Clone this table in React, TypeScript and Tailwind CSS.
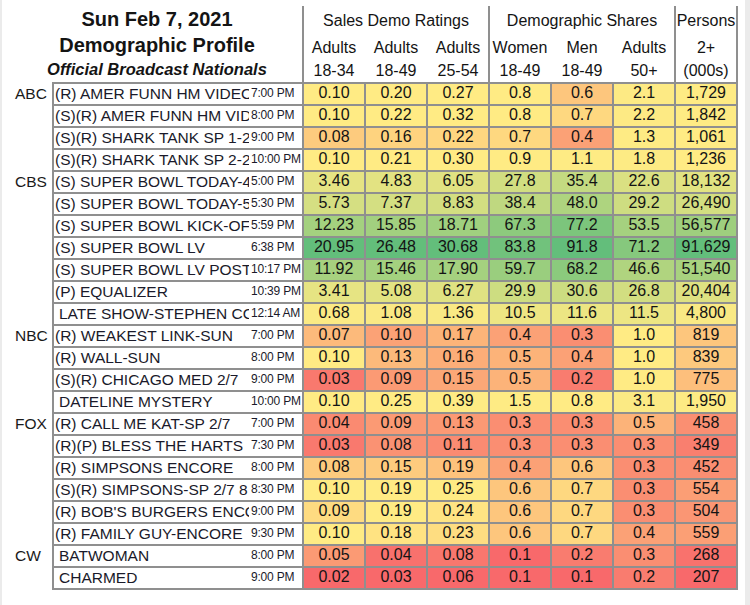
import React from "react";

type Row = { net?: string; name: string; time: string; indent?: boolean; v: string[] };

const rows: Row[] = [
  { net: "ABC", name: "(R) AMER FUNN HM VIDEO", time: "7:00 PM", v: ["0.10", "0.20", "0.27", "0.8", "0.6", "2.1", "1,729"] },
  { name: "(S)(R) AMER FUNN HM VID", time: "8:00 PM", v: ["0.10", "0.22", "0.32", "0.8", "0.7", "2.2", "1,842"] },
  { name: "(S)(R) SHARK TANK SP 1-2", time: "9:00 PM", v: ["0.08", "0.16", "0.22", "0.7", "0.4", "1.3", "1,061"] },
  { name: "(S)(R) SHARK TANK SP 2-2", time: "10:00 PM", v: ["0.10", "0.21", "0.30", "0.9", "1.1", "1.8", "1,236"] },
  { net: "CBS", name: "(S) SUPER BOWL TODAY-4", time: "5:00 PM", v: ["3.46", "4.83", "6.05", "27.8", "35.4", "22.6", "18,132"] },
  { name: "(S) SUPER BOWL TODAY-5", time: "5:30 PM", v: ["5.73", "7.37", "8.83", "38.4", "48.0", "29.2", "26,490"] },
  { name: "(S) SUPER BOWL KICK-OFF", time: "5:59 PM", v: ["12.23", "15.85", "18.71", "67.3", "77.2", "53.5", "56,577"] },
  { name: "(S) SUPER BOWL LV", time: "6:38 PM", v: ["20.95", "26.48", "30.68", "83.8", "91.8", "71.2", "91,629"] },
  { name: "(S) SUPER BOWL LV POST", time: "10:17 PM", v: ["11.92", "15.46", "17.90", "59.7", "68.2", "46.6", "51,540"] },
  { name: "(P) EQUALIZER", time: "10:39 PM", v: ["3.41", "5.08", "6.27", "29.9", "30.6", "26.8", "20,404"] },
  { name: "LATE SHOW-STEPHEN COLBERT", time: "12:14 AM", indent: true, v: ["0.68", "1.08", "1.36", "10.5", "11.6", "11.5", "4,800"] },
  { net: "NBC", name: "(R) WEAKEST LINK-SUN", time: "7:00 PM", v: ["0.07", "0.10", "0.17", "0.4", "0.3", "1.0", "819"] },
  { name: "(R) WALL-SUN", time: "8:00 PM", v: ["0.10", "0.13", "0.16", "0.5", "0.4", "1.0", "839"] },
  { name: "(S)(R) CHICAGO MED 2/7", time: "9:00 PM", v: ["0.03", "0.09", "0.15", "0.5", "0.2", "1.0", "775"] },
  { name: "DATELINE MYSTERY", time: "10:00 PM", indent: true, v: ["0.10", "0.25", "0.39", "1.5", "0.8", "3.1", "1,950"] },
  { net: "FOX", name: "(R) CALL ME KAT-SP 2/7", time: "7:00 PM", v: ["0.04", "0.09", "0.13", "0.3", "0.3", "0.5", "458"] },
  { name: "(R)(P) BLESS THE HARTS", time: "7:30 PM", v: ["0.03", "0.08", "0.11", "0.3", "0.3", "0.3", "349"] },
  { name: "(R) SIMPSONS ENCORE", time: "8:00 PM", v: ["0.08", "0.15", "0.19", "0.4", "0.6", "0.3", "452"] },
  { name: "(S)(R) SIMPSONS-SP 2/7 8", time: "8:30 PM", v: ["0.10", "0.19", "0.25", "0.6", "0.7", "0.3", "554"] },
  { name: "(R) BOB'S BURGERS ENCORE", time: "9:00 PM", v: ["0.09", "0.19", "0.24", "0.6", "0.7", "0.3", "504"] },
  { name: "(R) FAMILY GUY-ENCORE", time: "9:30 PM", v: ["0.10", "0.18", "0.23", "0.6", "0.7", "0.4", "559"] },
  { net: "CW", name: "BATWOMAN", time: "8:00 PM", indent: true, v: ["0.05", "0.04", "0.08", "0.1", "0.2", "0.3", "268"] },
  { name: "CHARMED", time: "9:00 PM", indent: true, v: ["0.02", "0.03", "0.06", "0.1", "0.1", "0.2", "207"] },
];

const RED = [248, 105, 107];
const YEL = [255, 235, 132];
const GRN = [99, 190, 123];

const num = (s: string) => parseFloat(s.replace(/,/g, ""));

function percentile(arr: number[], p: number) {
  const s = [...arr].sort((a, b) => a - b);
  const r = p * (s.length - 1);
  const lo = Math.floor(r);
  const hi = Math.ceil(r);
  return s[lo] + (s[hi] - s[lo]) * (r - lo);
}

function makeScale(vals: number[]) {
  const min = Math.min(...vals);
  const max = Math.max(...vals);
  const mid = percentile(vals, 0.5);
  return (v: number) => {
    let a: number[];
    let b: number[];
    let t: number;
    if (v <= mid) {
      a = RED;
      b = YEL;
      t = mid === min ? 1 : (v - min) / (mid - min);
    } else {
      a = YEL;
      b = GRN;
      t = (v - mid) / (max - mid);
    }
    const c = a.map((x, i) => Math.round(x + (b[i] - x) * t));
    return `rgb(${c.join(",")})`;
  };
}

const col = (i: number) => rows.map((r) => num(r.v[i]));
const scales = [
  makeScale(col(0)),
  makeScale(col(1)),
  makeScale(col(2)),
];
const shareScale = makeScale([...col(3), ...col(4), ...col(5)]);
const personsScale = makeScale(col(6));
const colorFor = (ci: number, v: number) =>
  ci < 3 ? scales[ci](v) : ci < 6 ? shareScale(v) : personsScale(v);

function HeaderGroup({ title, sub, wide }: { title: string; sub: [string, string][]; wide: boolean }) {
  return (
    <div
      className={
        wide
          ? "w-[186px] h-[76px] border-l-2 border-[#8f8f8f] shrink-0"
          : "w-[64px] h-[76px] border-l-2 border-r-2 border-[#8f8f8f] shrink-0"
      }
    >
      <div className="h-[27px] pt-[3px] leading-[24px] text-center text-[16px] whitespace-nowrap">{title}</div>
      <div className="flex gap-[2px]">
        {sub.map(([a, b], i) => (
          <div key={i} className="w-[60px] text-center text-[16px] whitespace-nowrap">
            <div className="h-[27px] pt-[3px] leading-[24px]">{a}</div>
            <div className="h-[22px] leading-[22px]">{b}</div>
          </div>
        ))}
      </div>
    </div>
  );
}

export default function App() {
  return (
    <div className="w-[750px] h-[605px] bg-white border-l-2 border-r-[5px] border-[#ebebeb] overflow-hidden font-['Liberation_Sans',Arial,sans-serif] text-[#141414]">
      {/* Header */}
      <div className="flex pt-[6px]">
        <div className="w-[300px] h-[76px] pl-[10px] text-center shrink-0">
          <div className="h-[27px] leading-[27px] text-[20px] font-bold whitespace-nowrap">Sun Feb 7, 2021</div>
          <div className="h-[24px] leading-[24px] text-[20px] font-bold whitespace-nowrap">Demographic Profile</div>
          <div className="h-[25px] leading-[25px] text-[16.5px] font-bold italic whitespace-nowrap">
            Official Broadcast Nationals
          </div>
        </div>
        <HeaderGroup
          wide
          title="Sales Demo Ratings"
          sub={[
            ["Adults", "18-34"],
            ["Adults", "18-49"],
            ["Adults", "25-54"],
          ]}
        />
        <HeaderGroup
          wide
          title="Demographic Shares"
          sub={[
            ["Women", "18-49"],
            ["Men", "18-49"],
            ["Adults", "50+"],
          ]}
        />
        <HeaderGroup wide={false} title="Persons" sub={[["2+", "(000s)"]]} />
      </div>

      {/* Body */}
      <div className="flex">
        <div className="w-[50px] shrink-0 flex flex-col gap-[2px] pt-[2px]">
          {rows.map((r, i) => (
            <div key={i} className="h-[20px] pl-[13px] text-[15.5px] leading-[19px] whitespace-nowrap text-[#1a1a1a]">
              {r.net ?? ""}
            </div>
          ))}
        </div>
        <div className="w-[686px] shrink-0 grid grid-cols-[248px_repeat(7,60px)] gap-[2px] bg-[#8f8f8f] p-[2px]">
          {rows.map((r, i) => (
            <React.Fragment key={i}>
              <div className="h-[20px] bg-white flex items-start overflow-hidden text-[#1a1a2a]">
                <span
                  className={
                    r.indent
                      ? "w-[195px] shrink-0 overflow-hidden whitespace-nowrap pl-[5px] text-[15.5px] leading-[19px]"
                      : "w-[195px] shrink-0 overflow-hidden whitespace-nowrap pl-[1px] text-[15.5px] leading-[19px]"
                  }
                >
                  {r.name}
                </span>
                <span className="ml-[2px] whitespace-nowrap text-[12px] leading-[19px] tracking-[-0.2px]">{r.time}</span>
              </div>
              {r.v.map((s, ci) => (
                <div
                  key={ci}
                  className="h-[20px] text-center text-[16px] leading-[18px] text-[#141414]"
                  style={{ backgroundColor: colorFor(ci, num(s)) }}
                >
                  {s}
                </div>
              ))}
            </React.Fragment>
          ))}
        </div>
      </div>
    </div>
  );
}
